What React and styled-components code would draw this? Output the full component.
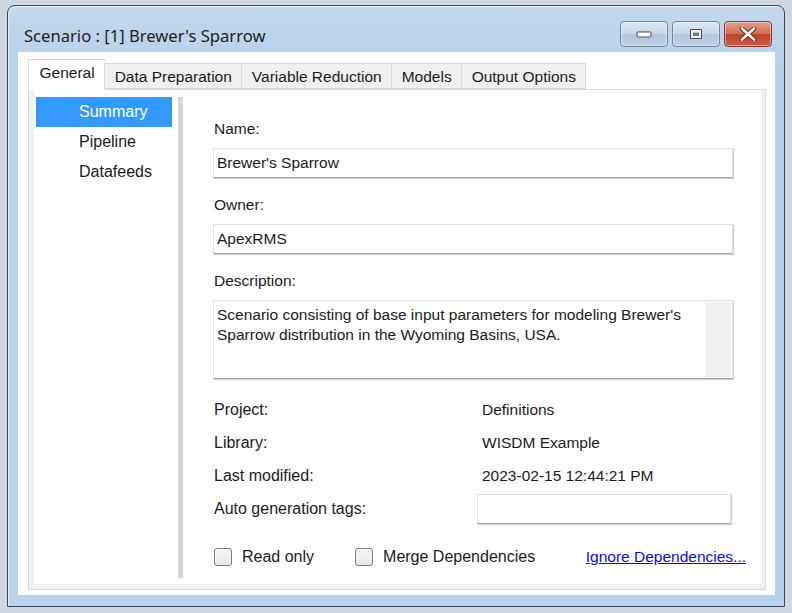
import React from 'react'
import styled, { createGlobalStyle } from 'styled-components'

const GlobalStyle = createGlobalStyle`
  html, body {
    margin: 0;
    padding: 0;
    background: #cdd6e1;
  }
  body {
    font-family: "Liberation Sans", Arial, sans-serif;
    color: #1b1b1b;
  }
`

const Page = styled.div`
  width: 792px;
  height: 613px;
  box-sizing: border-box;
  padding: 5px 7px 6px 7px;
  display: flex;
`

const Window = styled.div`
  flex: 1;
  display: flex;
  flex-direction: column;
  border: 1px solid #3b4650;
  border-radius: 8px 8px 0 0;
  background: linear-gradient(#c4d7ed, #b9d1ea 60px);
  box-shadow: inset 1px 1px 0 #e4eefa;
`

const TitleBar = styled.div`
  height: 46px;
  display: flex;
  align-items: flex-start;
  padding: 0 13px 0 16px;
`

const Title = styled.div`
  font-family: "Noto Sans", "Open Sans", sans-serif;
  font-size: 16.6px;
  color: #1e1e1e;
  margin-top: 18px;
  flex: 1;
`

const CaptionButtons = styled.div`
  display: flex;
  gap: 4px;
  margin-top: 15px;
  margin-right: -1px;
`

const CaptionButton = styled.div`
  width: 46px;
  height: 24px;
  border: 1px solid ${p => (p.$close ? '#8e3a2c' : '#6f8399')};
  border-radius: 4px;
  display: flex;
  align-items: center;
  justify-content: center;
  background: ${p =>
    p.$close
      ? 'linear-gradient(#e4a08c, #d46b52 48%, #c3442c 52%, #cc5a3d)'
      : 'linear-gradient(#dde7f3, #c6d6e9 48%, #b2c7df 52%, #bdd0e6)'};
  box-shadow: inset 0 0 0 1px rgba(255, 255, 255, 0.45);
`

const Client = styled.div`
  flex: 1;
  margin: 0 9px 11px 10px;
  background: #fff;
  padding: 6px 9px 5px 10px;
  display: flex;
  flex-direction: column;
`

const TabStrip = styled.div`
  display: flex;
  align-items: flex-end;
  height: 31px;
  position: relative;
  z-index: 1;
`

const Tab = styled.div`
  box-sizing: border-box;
  height: ${p => (p.$active ? '31px' : '26px')};
  padding: 0 9.5px;
  margin: ${p => (p.$active ? '0 -1px -1px 0' : '0 0 0 -1px')};
  border: 1px solid #d9d9d9;
  border-bottom: ${p => (p.$active ? 'none' : '1px solid #d9d9d9')};
  background: ${p => (p.$active ? '#fff' : '#f0f0f0')};
  font-size: 15.5px;
  display: flex;
  align-items: center;
  padding-top: ${p => (p.$active ? '0' : '1px')};
  padding-bottom: ${p => (p.$active ? '4px' : '0')};
  white-space: nowrap;
  &:first-child {
    margin-left: 0;
    padding: 0 10.5px 4px 10.5px;
  }
`

const TabPage = styled.div`
  flex: 1;
  border: 1px solid #d9d9d9;
  background: #f1f1f1;
  padding: 0 4px 5px 5px;
  display: flex;
`

const PageBody = styled.div`
  flex: 1;
  background: #fff;
  display: flex;
  padding: 7px 0 6px 2px;
`

const NavList = styled.div`
  width: 136px;
  display: flex;
  flex-direction: column;
`

const NavItem = styled.div`
  height: 30px;
  display: flex;
  align-items: center;
  padding-left: 43px;
  font-size: 16px;
  color: ${p => (p.$active ? '#fff' : '#1b1b1b')};
  background: ${p => (p.$active ? '#3399ff' : 'transparent')};
`

const Splitter = styled.div`
  width: 5px;
  margin-left: 6px;
  background: #d5d5d5;
`

const Details = styled.div`
  flex: 1;
  padding: 23px 28px 0 31px;
  display: flex;
  flex-direction: column;
  font-size: 15.5px;
`

const FieldLabel = styled.div`
  line-height: 18px;
  margin: ${p => p.$first ? '0' : '18px'} 0 10px 0;
`

const TextBox = styled.div`
  box-sizing: border-box;
  height: ${p => p.$tall ? '79px' : '30px'};
  margin-left: -1px;
  border: 1px solid #e1e1e1;
  border-bottom-color: #a3a3a3;
  box-shadow: 1px 1px 1px rgba(0, 0, 0, 0.18);
  display: flex;
  align-items: ${p => p.$tall ? 'stretch' : 'center'};
  padding-left: 3px;
  background: #fff;
`

const MultiText = styled.div`
  flex: 1;
  line-height: 20px;
  padding-top: 4px;
`

const ScrollTrack = styled.div`
  width: 26px;
  margin: 1px 1px 1px 0;
  background: #f0f0f0;
`

const InfoGrid = styled.div`
  display: grid;
  grid-template-columns: 263px 1fr;
  grid-auto-rows: 33px;
  align-items: center;
  margin-top: 14px;
`

const InfoLabel = styled.div`
  font-size: 16px;
`

const InfoValue = styled.div`
  padding-left: 5px;
`

const TagBox = styled(TextBox)`
  width: 254px;
  margin-left: 0;
`

const OptionRow = styled.div`
  display: flex;
  align-items: center;
  height: 30px;
  margin-top: 17px;
  font-size: 16px;
`

const Check = styled.label`
  display: flex;
  align-items: center;
  gap: 10px;
  margin-right: ${p => p.$gap}px;
`

const Box = styled.span`
  width: 16px;
  height: 16px;
  border: 1px solid #7c7c7c;
  border-radius: 3px;
  background: linear-gradient(#f7f7f7, #e9e9e9);
`

const Link = styled.a`
  color: #0a0aee;
  text-decoration: underline;
  margin-left: auto;
  margin-right: -13px;
  font-size: 15.5px;
  cursor: pointer;
`

const MinimizeIcon = () => (
  <svg width="16" height="8" viewBox="0 0 16 8">
    <rect x="1" y="2" width="14" height="5" rx="1" fill="#fff" stroke="#3d4a5a" strokeWidth="1" />
  </svg>
)

const MaximizeIcon = () => (
  <svg width="14" height="12" viewBox="0 0 14 12">
    <rect x="1.5" y="1.5" width="11" height="9" fill="#fff" stroke="#3d4a5a" strokeWidth="1" />
    <rect x="4" y="4.5" width="6" height="3.5" fill="#6a7d92" />
  </svg>
)

const CloseIcon = () => (
  <svg width="18" height="14" viewBox="0 0 18 14">
    <path d="M3 1.5 L15 12.5 M15 1.5 L3 12.5" stroke="#6b2418" strokeWidth="4.6" strokeLinecap="round" />
    <path d="M3 1.5 L15 12.5 M15 1.5 L3 12.5" stroke="#fff" strokeWidth="2.6" strokeLinecap="round" />
  </svg>
)

const tabs = ['General', 'Data Preparation', 'Variable Reduction', 'Models', 'Output Options']
const navItems = ['Summary', 'Pipeline', 'Datafeeds']
const info = [
  ['Project:', 'Definitions'],
  ['Library:', 'WISDM Example'],
  ['Last modified:', '2023-02-15 12:44:21 PM'],
]

export default function App() {
  return (
    <Page>
      <GlobalStyle />
      <Window>
        <TitleBar>
          <Title>Scenario : [1] Brewer's Sparrow</Title>
          <CaptionButtons>
            <CaptionButton><MinimizeIcon /></CaptionButton>
            <CaptionButton><MaximizeIcon /></CaptionButton>
            <CaptionButton $close><CloseIcon /></CaptionButton>
          </CaptionButtons>
        </TitleBar>
        <Client>
          <TabStrip>
            {tabs.map((t, i) => (
              <Tab key={t} $active={i === 0}>{t}</Tab>
            ))}
          </TabStrip>
          <TabPage>
            <PageBody>
              <NavList>
                {navItems.map((n, i) => (
                  <NavItem key={n} $active={i === 0}>{n}</NavItem>
                ))}
              </NavList>
              <Splitter />
              <Details>
                <FieldLabel $first>Name:</FieldLabel>
                <TextBox>Brewer's Sparrow</TextBox>
                <FieldLabel>Owner:</FieldLabel>
                <TextBox>ApexRMS</TextBox>
                <FieldLabel>Description:</FieldLabel>
                <TextBox $tall>
                  <MultiText>
                    Scenario consisting of base input parameters for modeling Brewer's<br />
                    Sparrow distribution in the Wyoming Basins, USA.
                  </MultiText>
                  <ScrollTrack />
                </TextBox>
                <InfoGrid>
                  {info.map(([k, v]) => (
                    <React.Fragment key={k}>
                      <InfoLabel>{k}</InfoLabel>
                      <InfoValue>{v}</InfoValue>
                    </React.Fragment>
                  ))}
                  <InfoLabel>Auto generation tags:</InfoLabel>
                  <TagBox />
                </InfoGrid>
                <OptionRow>
                  <Check $gap={41}><Box />Read only</Check>
                  <Check $gap={0}><Box />Merge Dependencies</Check>
                  <Link>Ignore Dependencies...</Link>
                </OptionRow>
              </Details>
            </PageBody>
          </TabPage>
        </Client>
      </Window>
    </Page>
  )
}
